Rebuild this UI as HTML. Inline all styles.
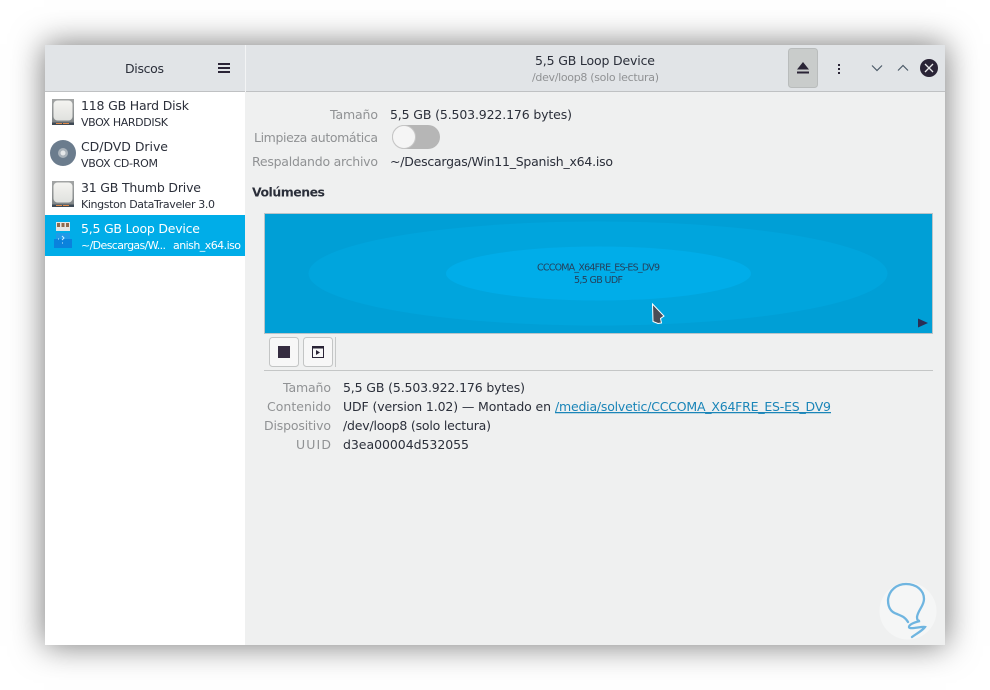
<!DOCTYPE html>
<html><head><meta charset="utf-8"><title>Discos</title>
<style>
html,body{margin:0;padding:0;background:#fff;width:990px;height:690px;overflow:hidden}
#win{position:absolute;left:45px;top:45px;width:900px;height:600px;background:#eff0f0;box-shadow:0 0 30px 1px rgba(0,0,0,.52)}
#side{position:absolute;left:0;top:47px;width:200px;height:553px;background:#fff}
#head{position:absolute;left:0;top:0;width:900px;height:46px;background:#e1e4e7;border-bottom:1px solid #bfc1c3}
#vs{position:absolute;left:200px;top:0;width:1px;height:47px;background:#f3f4f5}
#sel{position:absolute;left:0;top:170px;width:200px;height:41px;background:#00ade8}
svg{position:absolute;left:0;top:0}
text{font-family:"DejaVu Sans",sans-serif;font-size:12.5px;fill:#2b2f3a}
.l{fill:#909294}
.s{font-size:11px}
.w{fill:#fff}
</style></head><body>
<div id="win"><div id="head"></div><div id="vs"></div><div id="side"></div><div id="sel"></div></div>
<svg width="990" height="690" viewBox="0 0 990 690">
<defs>
<linearGradient id="dk" x1="0" y1="0" x2="0" y2="1"><stop offset="0" stop-color="#a3a5a5"/><stop offset="1" stop-color="#7d8284"/></linearGradient>
<linearGradient id="wh" x1="0" y1="0" x2="0" y2="1"><stop offset="0" stop-color="#f4f4f1"/><stop offset="1" stop-color="#e0e1de"/></linearGradient>
</defs>
<!-- header icons -->
<g fill="#2a2436"><rect x="218" y="63" width="12" height="2"/><rect x="218" y="67" width="12" height="2"/><rect x="218" y="71" width="12" height="2"/></g>
<rect x="788.5" y="48.5" width="29" height="39" rx="3" fill="#c9cccb" stroke="#b9bcbc"/>
<path d="M803 62l6 7.500h-12z" fill="#2a2436"/><rect x="797" y="71.500" width="12" height="2" fill="#2a2436"/>
<g fill="#2a2436"><rect x="838" y="64" width="2" height="2"/><rect x="838" y="68" width="2" height="2"/><rect x="838" y="72" width="2" height="2"/></g>
<path d="M872 65.500l5 5 5-5M898 70.500l5-5 5 5" fill="none" stroke="#4c5a68" stroke-width="1.200"/>
<circle cx="929" cy="68" r="9" fill="#2a2436"/><path d="M925 64l8 8M933 64l-8 8" stroke="#e8e8ea" stroke-width="1.300"/>

<!-- sidebar icons -->
<g>
<rect x="52" y="99" width="22" height="26" fill="url(#dk)"/><rect x="53.500" y="100.500" width="19" height="20" rx="4" fill="url(#wh)"/><rect x="52" y="122.500" width="22" height="2.500" fill="#3f4a55"/><rect x="56" y="123" width="6" height="1" fill="#e08a4a"/><rect x="63" y="123" width="6" height="1" fill="#e08a4a"/>
</g>
<circle cx="63" cy="153" r="13" fill="#6b7c8d"/><circle cx="63" cy="153" r="5" fill="#aab3bb"/><circle cx="63" cy="153" r="2.500" fill="#e6e8ea"/>
<g>
<rect x="52" y="181" width="22" height="26" fill="url(#dk)"/><rect x="53.500" y="182.500" width="19" height="20" rx="4" fill="url(#wh)"/><rect x="52" y="204.500" width="22" height="2.500" fill="#3f4a55"/><rect x="56" y="205" width="6" height="1" fill="#e08a4a"/><rect x="63" y="205" width="6" height="1" fill="#e08a4a"/>
</g>
<rect x="56" y="222" width="14" height="9" fill="#e6e7e5"/><g fill="#8f6a4c"><rect x="57" y="223" width="3" height="4"/><rect x="61.500" y="223" width="3" height="4"/><rect x="66" y="223" width="3" height="4"/></g>
<rect x="56" y="233" width="14" height="6" fill="#1f9ae8"/><rect x="54" y="239" width="18" height="9" fill="#0a82dd"/><path d="M62 236l2 2-2 2M59 239h-1M63 243h-1" stroke="#cfeeff" fill="none"/>

<!-- volume bar -->
<rect x="264.500" y="213.500" width="668" height="120" fill="#009fd6" stroke="#b9c4c9"/>
<ellipse cx="598" cy="273.500" rx="289.500" ry="52" fill="#00a5dd"/>
<ellipse cx="598.500" cy="273.500" rx="152.500" ry="27" fill="#00ade9"/>
<path d="M918 318.500l10 4.500-10 4.500z" fill="#2a2f55"/>
<path d="M652.500 304L664 316l-3.500 2.500 1 4.500-3.500.5-5-2z" fill="#4a4c56" stroke="#fff" stroke-width="1"/>

<!-- buttons -->
<rect x="269.500" y="337.500" width="29" height="29" rx="3" fill="#f7f7f7" stroke="#c3c5c5"/>
<rect x="278" y="346" width="12" height="12" fill="#352c40"/>
<rect x="303.500" y="337.500" width="29" height="29" rx="3" fill="#f7f7f7" stroke="#c3c5c5"/>
<rect x="312.500" y="346.500" width="11" height="11" fill="#f7f7f7" stroke="#2a2436"/><rect x="312" y="346" width="12" height="2.500" fill="#2a2436"/><path d="M316 350l4 2.500-4 2.500z" fill="#2a2436"/>
<rect x="335" y="337" width="1" height="30" fill="#c6c8c8"/>
<rect x="264" y="370" width="669" height="1" fill="#c4c6c6"/>

<!-- toggle -->
<rect x="392" y="125" width="48" height="24" rx="12" fill="#b6b6b6"/>
<circle cx="404" cy="137" r="11.500" fill="#f5f5f5" stroke="#c6c6c6"/>

<!-- text -->
<text x="125" y="73" textLength="39">Discos</text>
<text x="535" y="65" textLength="120">5,5 GB Loop Device</text>
<text x="532" y="81" textLength="127" class="l s">/dev/loop8 (solo lectura)</text>

<text x="81" y="110" textLength="108">118 GB Hard Disk</text>
<text x="81" y="126" textLength="87" class="s">VBOX HARDDISK</text>
<text x="81" y="151" textLength="87">CD/DVD Drive</text>
<text x="81" y="167" textLength="77" class="s">VBOX CD-ROM</text>
<text x="81" y="192" textLength="120">31 GB Thumb Drive</text>
<text x="81" y="208" textLength="134" class="s">Kingston DataTraveler 3.0</text>
<text x="81" y="233" textLength="119" class="w">5,5 GB Loop Device</text>
<text x="81" y="249" textLength="85" class="s w">~/Descargas/W...</text>
<text x="173" y="249" textLength="68" class="s w">anish_x64.iso</text>

<text x="330" y="119" textLength="48" class="l">Tamaño</text>
<text x="254" y="142" textLength="124" class="l">Limpieza automática</text>
<text x="252" y="166" textLength="126" class="l">Respaldando archivo</text>
<text x="390" y="119" textLength="182">5,5 GB (5.503.922.176 bytes)</text>
<text x="390" y="166" textLength="223">~/Descargas/Win11_Spanish_x64.iso</text>
<text x="252" y="196.500" textLength="73" style="font-weight:bold;font-size:12.500px">Volúmenes</text>

<text x="537" y="270.500" textLength="123" style="font-size:9.500px;fill:#24405c">CCCOMA_X64FRE_ES-ES_DV9</text>
<text x="574" y="283" textLength="49" style="font-size:9.500px;fill:#24405c">5,5 GB UDF</text>

<text x="283" y="392" textLength="48" class="l">Tamaño</text>
<text x="267" y="411" textLength="64" class="l">Contenido</text>
<text x="264" y="430" textLength="67" class="l">Dispositivo</text>
<text x="296" y="449" textLength="35" class="l">UUID</text>
<text x="343" y="392" textLength="182">5,5 GB (5.503.922.176 bytes)</text>
<text x="343" y="411" textLength="208">UDF (version 1.02) — Montado en</text>
<text x="555" y="411" textLength="276" style="fill:#1a85b8;text-decoration:underline">/media/solvetic/CCCOMA_X64FRE_ES-ES_DV9</text>
<text x="343" y="430" textLength="148">/dev/loop8 (solo lectura)</text>
<text x="343" y="449" textLength="126">d3ea00004d532055</text>

<!-- logo -->
<circle cx="908" cy="611" r="28.500" fill="#f5f6f6"/>
<path d="M908 622C905 617 902 616 897 614C890 612 888 606 888 600C889 590 897 584 906 584C916 584 924 590 924 599C924 606 918 610 917 617C917 620 918 621 920 621C916 622 909 624 909 627C909 630 922 626 925 627C922 631 916 634 912 637" fill="none" stroke="#6fb5e0" stroke-width="2.300" stroke-linecap="round"/>
</svg>
</body></html>
